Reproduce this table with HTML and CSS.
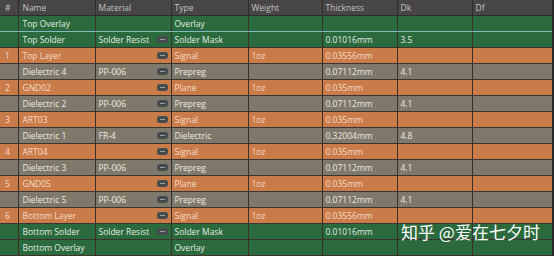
FILE: index.html
```html
<!DOCTYPE html>
<html>
<head>
<meta charset="utf-8">
<link rel="stylesheet" href="styles.css">
</head>
<body>
<div class="wrap">
<table class="stack">
<colgroup>
<col class="c-num"><col class="c-name"><col class="c-mat"><col class="c-type"><col class="c-wt"><col class="c-th"><col class="c-dk"><col class="c-df">
</colgroup>
<thead>
<tr><th>#</th><th>Name</th><th>Material</th><th>Type</th><th>Weight</th><th>Thickness</th><th>Dk</th><th>Df</th></tr>
</thead>
<tbody>
<tr class="g sel"><td></td><td>Top Overlay</td><td></td><td>Overlay</td><td></td><td></td><td></td><td></td></tr>
<tr class="g"><td></td><td>Top Solder</td><td><div class="mat"><span>Solder Resist</span><i class="btn"></i></div></td><td>Solder Mask</td><td></td><td>0.01016mm</td><td>3.5</td><td></td></tr>
<tr class="o"><td>1</td><td>Top Layer</td><td><div class="mat"><span></span><i class="btn"></i></div></td><td>Signal</td><td>1oz</td><td>0.03556mm</td><td></td><td></td></tr>
<tr class="d"><td></td><td>Dielectric 4</td><td><div class="mat"><span>PP-006</span><i class="btn"></i></div></td><td>Prepreg</td><td></td><td>0.07112mm</td><td>4.1</td><td></td></tr>
<tr class="o"><td>2</td><td>GND02</td><td><div class="mat"><span></span><i class="btn"></i></div></td><td>Plane</td><td>1oz</td><td>0.035mm</td><td></td><td></td></tr>
<tr class="d"><td></td><td>Dielectric 2</td><td><div class="mat"><span>PP-006</span><i class="btn"></i></div></td><td>Prepreg</td><td></td><td>0.07112mm</td><td>4.1</td><td></td></tr>
<tr class="o"><td>3</td><td>ART03</td><td><div class="mat"><span></span><i class="btn"></i></div></td><td>Signal</td><td>1oz</td><td>0.035mm</td><td></td><td></td></tr>
<tr class="d"><td></td><td>Dielectric 1</td><td><div class="mat"><span>FR-4</span><i class="btn"></i></div></td><td>Dielectric</td><td></td><td>0.32004mm</td><td>4.8</td><td></td></tr>
<tr class="o"><td>4</td><td>ART04</td><td><div class="mat"><span></span><i class="btn"></i></div></td><td>Signal</td><td>1oz</td><td>0.035mm</td><td></td><td></td></tr>
<tr class="d"><td></td><td>Dielectric 3</td><td><div class="mat"><span>PP-006</span><i class="btn"></i></div></td><td>Prepreg</td><td></td><td>0.07112mm</td><td>4.1</td><td></td></tr>
<tr class="o"><td>5</td><td>GND05</td><td><div class="mat"><span></span><i class="btn"></i></div></td><td>Plane</td><td>1oz</td><td>0.035mm</td><td></td><td></td></tr>
<tr class="d"><td></td><td>Dielectric 5</td><td><div class="mat"><span>PP-006</span><i class="btn"></i></div></td><td>Prepreg</td><td></td><td>0.07112mm</td><td>4.1</td><td></td></tr>
<tr class="o"><td>6</td><td>Bottom Layer</td><td><div class="mat"><span></span><i class="btn"></i></div></td><td>Signal</td><td>1oz</td><td>0.03556mm</td><td></td><td></td></tr>
<tr class="g"><td></td><td>Bottom Solder</td><td><div class="mat"><span>Solder Resist</span><i class="btn"></i></div></td><td>Solder Mask</td><td></td><td>0.01016mm</td><td></td><td></td></tr>
<tr class="g"><td></td><td>Bottom Overlay</td><td></td><td>Overlay</td><td></td><td></td><td></td><td></td></tr>
</tbody>
</table>
<div class="mark">知乎 @爱在七夕时</div>
</div>
</body>
</html>
```
FILE: styles.css
```css
html, body {
  margin: 0;
  padding: 0;
  background: #2a2827;
}
.wrap {
  position: relative;
  width: 554px;
  height: 256px;
  overflow: hidden;
}
.stack {
  border-collapse: collapse;
  table-layout: fixed;
  width: 552px;
  font-family: "Open Sans", "Noto Sans", sans-serif;
  font-size: 8.5px;
}
.c-num { width: 18px; }
.c-name { width: 77px; }
.c-mat { width: 76px; }
.c-type { width: 77px; }
.c-wt { width: 74px; }
.c-th { width: 75px; }
.c-dk { width: 75px; }
.c-df { width: 80px; }

th {
  height: 15px;
  padding: 0 0 0 3px;
  background: #474545;
  color: #c4c4c4;
  font-weight: normal;
  text-align: left;
  border-left: 1px solid #2e2c2c;
  border-bottom: 1px solid #2e2c2c;
  white-space: nowrap;
  overflow: hidden;
}
th:first-child { border-left: none; padding-left: 5px; }
td {
  height: 15px;
  padding: 0 0 0 3px;
  border-left: 1px solid #3a2e28;
  border-bottom: 1px solid #3a3530;
  white-space: nowrap;
  overflow: hidden;
  line-height: 15px;
}
td:first-child { border-left: none; padding-left: 5px; }
td:nth-child(2), th:nth-child(2) { padding-left: 4px; }
.g td { background: #2b6a3d; color: #e2ece4; }
.o td { background: #c97b4a; color: #f6dcc6; }
.d td { background: #7e796a; color: #ecebe4; }
.sel td {
  border-top: 1px solid #86b6c0;
  border-bottom: 1px solid #86b6c0;
}
.mat {
  display: flex;
  align-items: center;
  justify-content: space-between;
  padding-right: 3px;
}
.btn {
  display: block;
  width: 11px;
  height: 7px;
  border-radius: 3px;
  background: #454a4c;
  position: relative;
}
.btn::after {
  content: "";
  position: absolute;
  left: 3px;
  right: 3px;
  top: 3px;
  height: 1px;
  background: #9aa2a6;
}
.mark {
  position: absolute;
  left: 401px;
  top: 221px;
  font-family: "Noto Sans CJK SC", sans-serif;
  font-size: 17px;
  color: #ffffff;
  line-height: 22px;
  white-space: nowrap;
}
```
